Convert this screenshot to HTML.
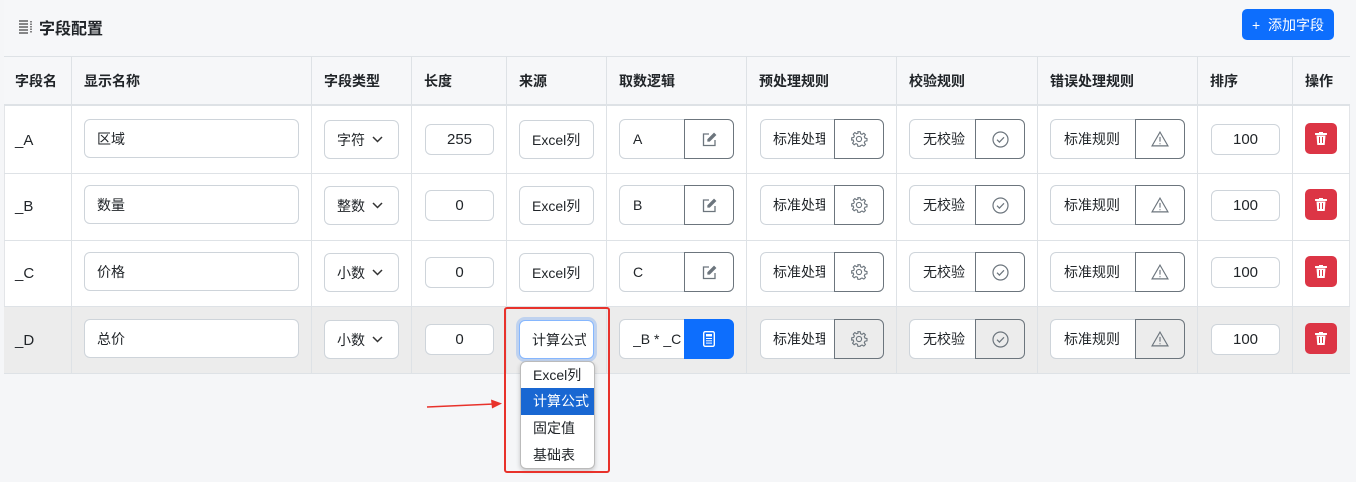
<!DOCTYPE html>
<html><head><meta charset="utf-8"><style>
*{box-sizing:border-box;margin:0;padding:0}
body{width:1356px;height:482px;background:#f5f6f8;font-family:"Liberation Sans","Noto Sans CJK SC",sans-serif;font-size:14px;color:#212529;position:relative;overflow:hidden}
.a{position:absolute}
.card{left:4px;top:0;width:1346px;height:374px;background:#fff;border:1px solid #e3e5e8;border-top:none}
.hdr{left:4px;top:0;width:1346px;height:57px;background:#f6f7f9;border-bottom:1px solid #dee2e6}
.th{top:57px;height:49px;background:#f6f7f9;border-bottom:2px solid #dee2e6}
.vl{top:57px;width:1px;height:317px;background:#dee2e6}
.hl{left:4px;width:1346px;height:1px;background:#dee2e6}
.t{font-weight:bold;line-height:49px;top:57px;font-size:14px}
.in{background:#fff;border:1px solid #ced4da;border-radius:6px;display:flex;align-items:center;padding-left:12px;overflow:hidden;white-space:nowrap}
.btn{border:1px solid #6c757d;border-radius:0 6px 6px 0;background:#fff;display:flex;align-items:center;justify-content:center}
.del{background:#dc3545;border-radius:5px;display:flex;align-items:center;justify-content:center}
</style></head><body>
<div class="a card"></div>
<div class="a hdr"></div>
<div class="a" style="left:18px;top:15px;font-size:16px;font-weight:bold;display:flex;align-items:center;gap:5px"><svg width="16" height="14" viewBox="0 0 16 14"><g stroke="#444" stroke-width="1.3"><path d="M1 1h9M1 4h9M1 7h9M1 10h9M1 13h9"/><path d="M13 1v12" stroke-dasharray="1.5 1"/></g></svg>字段配置</div>
<div class="a" style="left:1242px;top:9px;width:92px;height:31px;background:#0d6efd;border-radius:5px;color:#fff;display:flex;align-items:center;justify-content:center;font-size:14px">+&nbsp; 添加字段</div>
<div class="a th" style="left:4px;width:1346px"></div>
<div class="a" style="left:4px;top:306px;width:1346px;height:67px;background:#ececec"></div>
<div class="a hl" style="top:173px"></div><div class="a hl" style="top:240px"></div><div class="a hl" style="top:306px"></div><div class="a hl" style="top:373px"></div>
<div class="a vl" style="left:71px"></div><div class="a vl" style="left:311px"></div><div class="a vl" style="left:411px"></div><div class="a vl" style="left:506px"></div><div class="a vl" style="left:606px"></div><div class="a vl" style="left:746px"></div><div class="a vl" style="left:896px"></div><div class="a vl" style="left:1037px"></div><div class="a vl" style="left:1197px"></div><div class="a vl" style="left:1292px"></div>
<div class="a t" style="left:15px">字段名</div><div class="a t" style="left:84px">显示名称</div><div class="a t" style="left:324px">字段类型</div><div class="a t" style="left:424px">长度</div><div class="a t" style="left:519px">来源</div><div class="a t" style="left:619px">取数逻辑</div><div class="a t" style="left:759px">预处理规则</div><div class="a t" style="left:909px">校验规则</div><div class="a t" style="left:1050px">错误处理规则</div><div class="a t" style="left:1210px">排序</div><div class="a t" style="left:1305px">操作</div>

<div id="rows"></div>
<script>
var rows=[["_A","区域","字符","255","Excel列","A",139],["_B","数量","整数","0","Excel列","B",205],["_C","价格","小数","0","Excel列","C",272],["_D","总价","小数","0","计算公式","_B * _C",339]];
var h="";
var gear='<svg width="18" height="18" viewBox="0 0 16 16" fill="none" stroke="#6c757d" stroke-width="1"><circle cx="8" cy="8" r="2.3"/><path d="M7 1.5h2l.4 1.8 1.3.6 1.6-1 1.4 1.4-1 1.6.6 1.3 1.8.4v2l-1.8.4-.6 1.3 1 1.6-1.4 1.4-1.6-1-1.3.6L9 14.5H7l-.4-1.8-1.3-.6-1.6 1-1.4-1.4 1-1.6-.6-1.3L1.5 9V7l1.8-.4.6-1.3-1-1.6 1.4-1.4 1.6 1 1.3-.6z"/></svg>';
var chk='<svg width="17" height="17" viewBox="0 0 17 17" fill="none" stroke="#6c757d" stroke-width="1.2"><circle cx="8.5" cy="8.5" r="7.5"/><path d="M5 8.7l2.4 2.4 4.6-4.8"/></svg>';
var warn='<svg width="18" height="16" viewBox="0 0 17 15" fill="none" stroke="#6c757d" stroke-width="1.1"><path d="M8.5 1L16 14H1z"/><path d="M8.5 5.5v4.5M8.5 11.5v1"/></svg>';
var edit='<svg width="15" height="15" viewBox="0 0 15 15" fill="none" stroke="#6c757d" stroke-width="1.3"><path d="M7 2H1.5v11.5H13V8"/><path d="M12 1.5l1.5 1.5-6 6H6V7.5z" fill="#6c757d"/></svg>';
var calc='<svg width="12" height="16" viewBox="0 0 12 16"><rect x=".7" y=".7" width="10.6" height="14.6" rx="1.5" fill="none" stroke="#fff" stroke-width="1.4"/><rect x="3" y="3" width="6" height="2.5" fill="#fff"/><g fill="#fff"><rect x="3" y="7" width="6" height="1"/><rect x="3" y="9.3" width="6" height="1"/><rect x="3" y="11.6" width="6" height="1"/></g></svg>';
var trash='<svg width="12" height="13" viewBox="0 0 12 13" fill="#fff"><rect x="0" y="1" width="12" height="2" rx=".5"/><rect x="4" y="0" width="4" height="1.5"/><path d="M1.5 3.5h9l-.8 9.5H2.3z"/><g fill="#dc3545"><rect x="4" y="5" width="1" height="6"/><rect x="7" y="5" width="1" height="6"/></g></svg>';
rows.forEach(function(r,i){var c=r[6],D=i==3;
h+='<div class="a" style="left:15px;top:'+(c-8)+'px;font-size:15px;line-height:20px">'+r[0]+'</div>';
h+='<div class="a in" style="left:84px;top:'+(c-20)+'px;width:215px;height:39px">'+r[1]+'</div>';
h+='<div class="a in" style="left:324px;top:'+(c-19)+'px;width:75px;height:39px">'+r[2]+'<svg style="margin-left:7px" width="11" height="7" viewBox="0 0 11 7"><path d="M1 1l4.5 4.5L10 1" fill="none" stroke="#333" stroke-width="1.5"/></svg></div>';
h+='<div class="a in" style="left:425px;top:'+(c-15)+'px;width:69px;height:31px;justify-content:center;padding:0;font-size:15px">'+r[3]+'</div>';
h+='<div class="a in" style="left:519px;top:'+(c-19)+'px;width:75px;height:39px;padding-left:12px'+(D?';border-color:#86b7fe;box-shadow:0 0 0 3px rgba(13,110,253,.2)':'')+'"><span style="display:inline-block;width:'+(D?54:62)+'px;overflow:hidden">'+r[4]+'</span></div>';
h+='<div class="a in" style="left:619px;top:'+(c-20)+'px;width:70px;height:40px;border-radius:6px 0 0 6px;padding-left:13px">'+(D?'<span style="width:48px;overflow:hidden">'+r[5]+'</span>':r[5])+'</div>';
h+='<div class="a btn" style="left:684px;top:'+(c-20)+'px;width:50px;height:40px;'+(D?'background:#0d6efd;border-color:#0d6efd':'')+'">'+(D?calc:edit)+'</div>';
h+='<div class="a in" style="left:760px;top:'+(c-20)+'px;width:78px;height:40px;border-radius:6px 0 0 6px;padding-left:12px"><span style="width:52px;overflow:hidden">标准处理</span></div>';
h+='<div class="a btn" style="left:834px;top:'+(c-20)+'px;width:50px;height:40px;'+(D?'background:#ececec':'')+'">'+gear+'</div>';
h+='<div class="a in" style="left:909px;top:'+(c-20)+'px;width:70px;height:40px;border-radius:6px 0 0 6px;padding-left:13px">无校验</div>';
h+='<div class="a btn" style="left:975px;top:'+(c-20)+'px;width:50px;height:40px;'+(D?'background:#ececec':'')+'">'+chk+'</div>';
h+='<div class="a in" style="left:1050px;top:'+(c-20)+'px;width:90px;height:40px;border-radius:6px 0 0 6px;padding-left:13px">标准规则</div>';
h+='<div class="a btn" style="left:1135px;top:'+(c-20)+'px;width:50px;height:40px;'+(D?'background:#ececec':'')+'">'+warn+'</div>';
h+='<div class="a in" style="left:1211px;top:'+(c-15)+'px;width:69px;height:31px;justify-content:center;padding:0;font-size:15px">100</div>';
h+='<div class="a del" style="left:1305px;top:'+(c-16)+'px;width:32px;height:31px">'+trash+'</div>';
});
document.getElementById('rows').innerHTML=h;
</script>
<div class="a" style="left:520px;top:361px;width:75px;height:108px;background:#fff;border:1px solid #bbb;border-radius:6px;box-shadow:0 2px 5px rgba(0,0,0,.2);font-size:14px;overflow:hidden">
<div style="height:26px;line-height:26px;padding-left:12px">Excel列</div>
<div style="height:27px;line-height:27px;padding-left:12px;background:#1967d2;color:#fff">计算公式</div>
<div style="height:27px;line-height:27px;padding-left:12px">固定值</div>
<div style="height:27px;line-height:27px;padding-left:12px">基础表</div>
</div>
<div class="a" style="left:504px;top:307px;width:106px;height:166px;border:2px solid #e8322b;border-radius:3px"></div>
<svg class="a" style="left:420px;top:396px" width="86" height="16"><path d="M7 11L74 8" stroke="#e8322b" stroke-width="1.5"/><path d="M82 7.5L71 3.5l1 9z" fill="#e8322b"/></svg>
</body></html>
